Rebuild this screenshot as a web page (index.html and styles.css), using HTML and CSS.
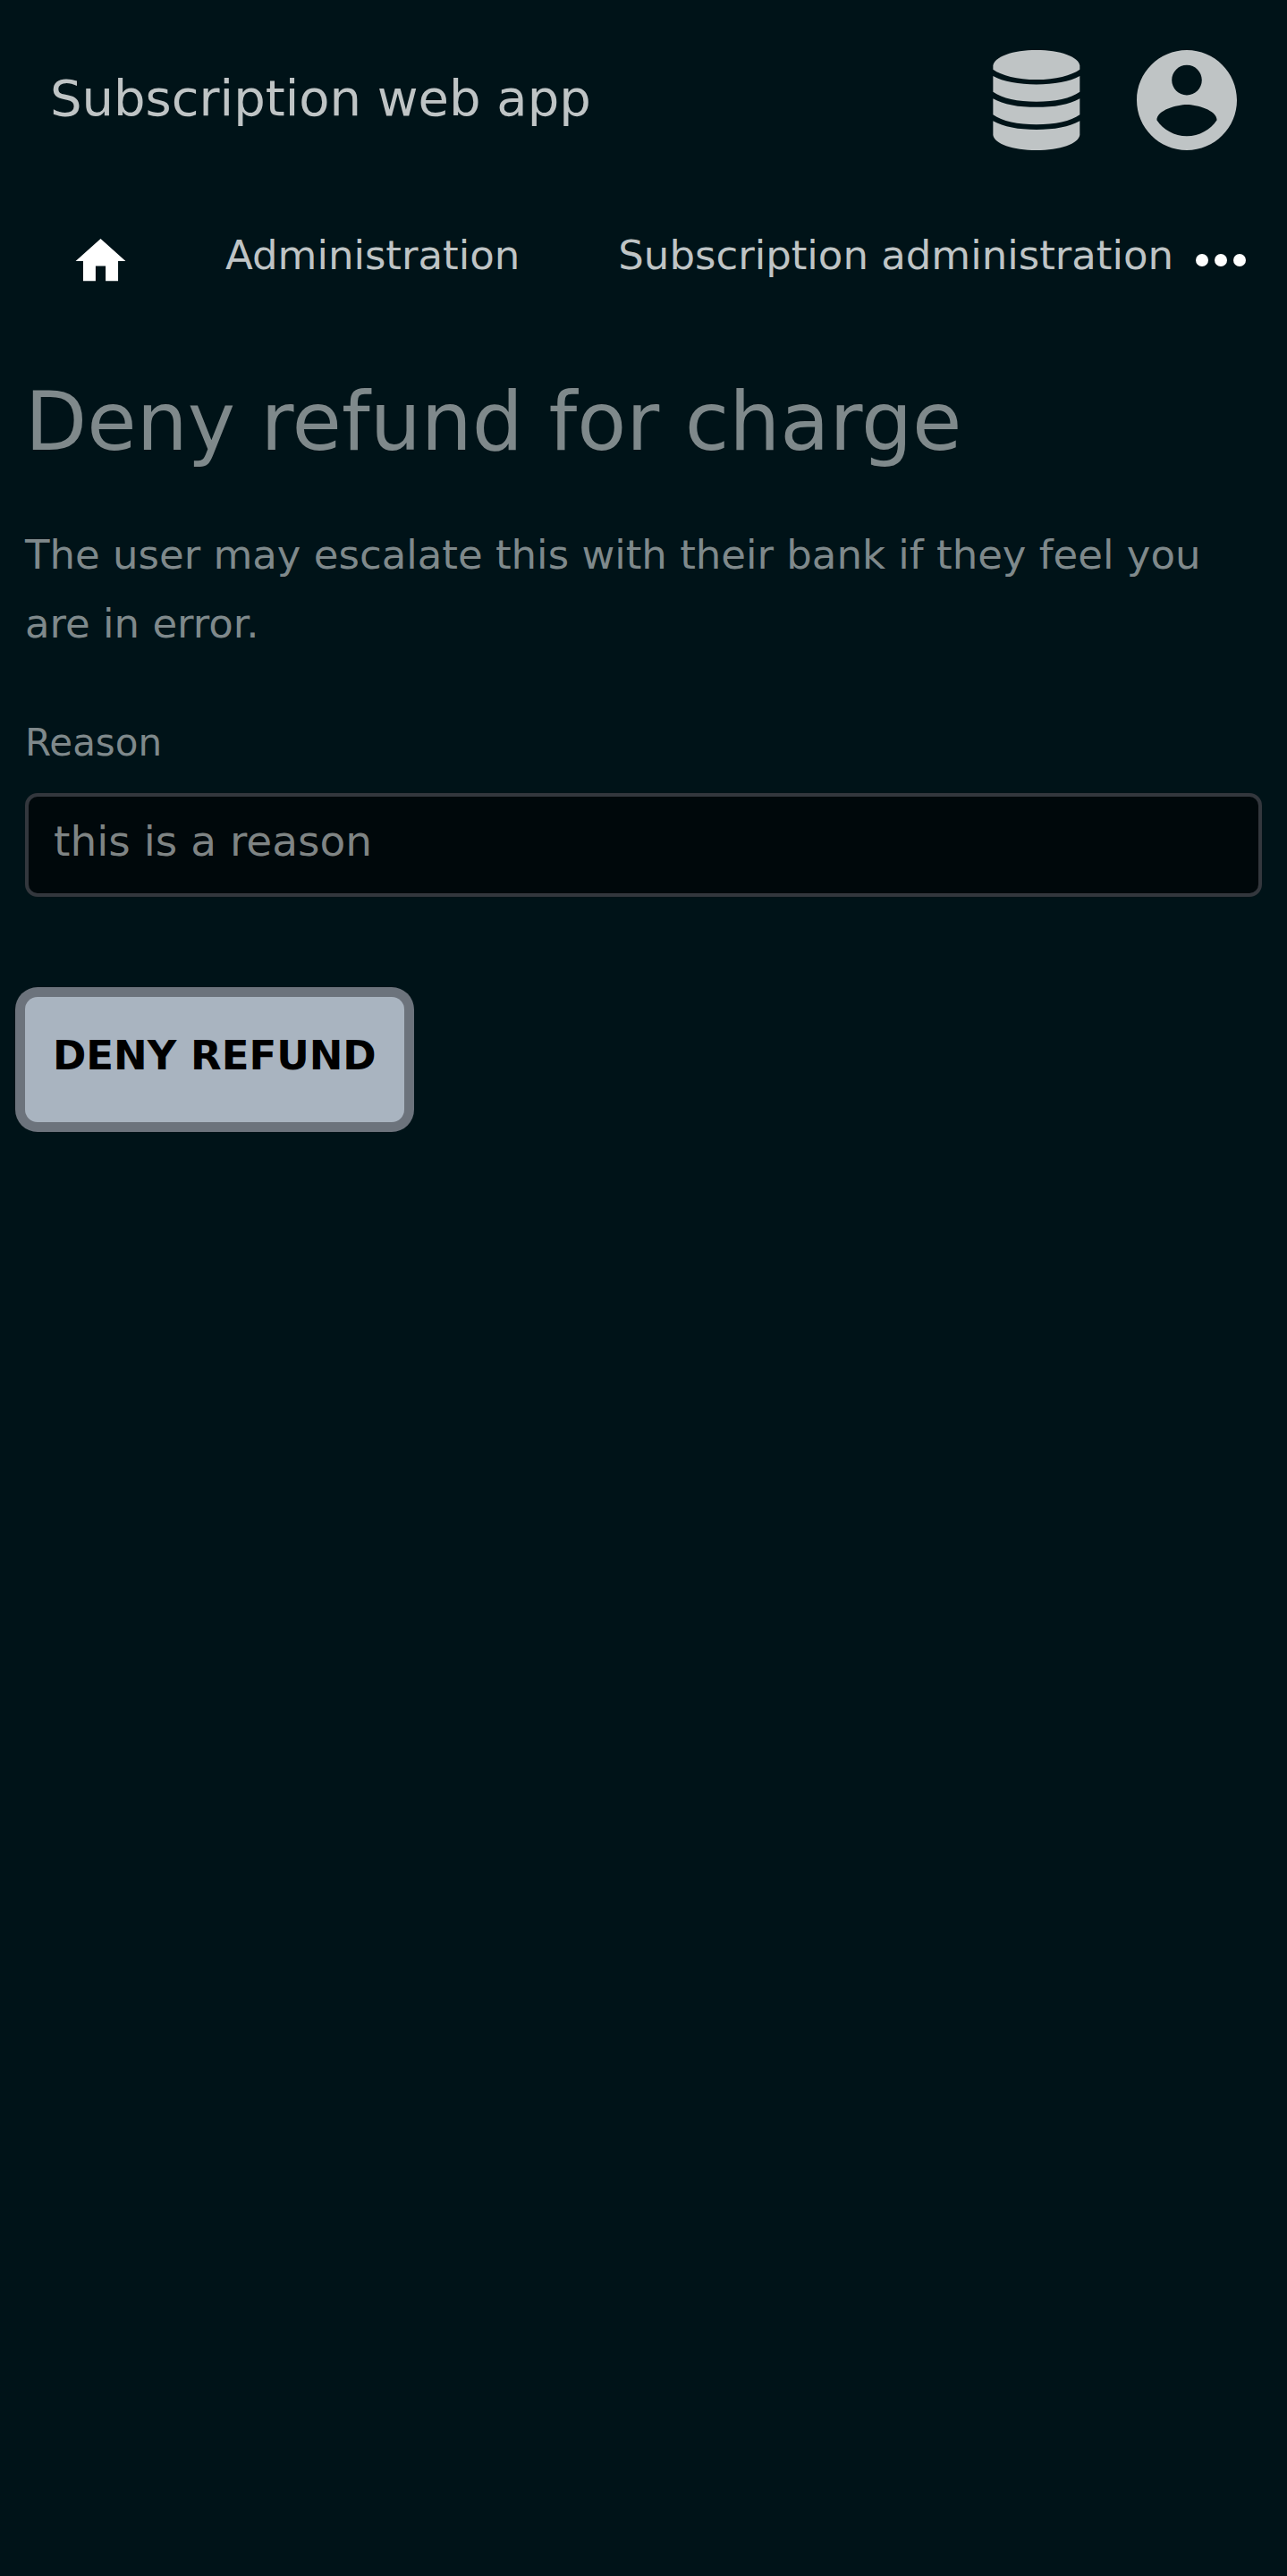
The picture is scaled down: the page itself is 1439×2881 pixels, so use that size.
FILE: index.html
```html
<!DOCTYPE html>
<html lang="en">
<head>
<meta charset="utf-8">
<meta name="viewport" content="width=device-width, initial-scale=1">
<title>Deny refund for charge</title>
<link rel="stylesheet" href="styles.css">
</head>
<body>
<header class="header">
  <a class="brand" href="#">Subscription web app</a>
  <div class="menus">
    <button class="icon-button" type="button" aria-label="Administrator menu">
      <svg class="icon-large" viewBox="-22 0 335 335" aria-hidden="true">
        <path d="M0 52C4 22 66 0 145 0s141 22 145 52v13C262 85 209 99 145 99S28 85 0 65z"/>
        <path d="M0 87c34 19 86 28 145 28s111-9 145-28v53c-30 22-83 33-145 33S30 162 0 140z"/>
        <path d="M0 162c34 20 86 29 145 29s111-9 145-29v54c-30 22-83 33-145 33S30 238 0 216z"/>
        <path d="M0 237c34 20 86 29 145 29s111-9 145-29v47c-4 29-66 51-145 51S4 313 0 284z"/>
      </svg>
    </button>
    <button class="icon-button" type="button" aria-label="Account menu">
      <svg class="icon-large" viewBox="2 2 20 20" aria-hidden="true">
        <path d="M12 2C6.48 2 2 6.48 2 12s4.480 10 10 10 10-4.480 10-10S17.520 2 12 2zm0 3c1.660 0 3 1.340 3 3s-1.340 3-3 3-3-1.340-3-3 1.340-3 3-3zm0 14.200c-2.500 0-4.710-1.280-6-3.220.03-1.990 4-3.080 6-3.080 1.990 0 5.970 1.090 6 3.080-1.290 1.940-3.500 3.220-6 3.220z"/>
      </svg>
    </button>
  </div>
</header>
<nav class="nav" aria-label="Main">
  <a class="home" href="#" aria-label="Home">
    <svg class="icon-home" viewBox="0 0 24 24" aria-hidden="true"><path d="M10 20v-6h4v6h5v-8h3L12 3 2 12h3v8z"/></svg>
  </a>
  <a class="nav-link" href="#">Administration</a>
  <a class="nav-link" href="#">Subscription administration</a>
  <button class="more" type="button" aria-label="More">
    <svg class="icon-more" viewBox="0 0 56 68" aria-hidden="true"><circle cx="7" cy="33" r="7"/><circle cx="28" cy="33" r="7"/><circle cx="49" cy="33" r="7"/></svg>
  </button>
</nav>
<main class="main">
  <h1 class="title">Deny refund for charge</h1>
  <p class="note">The user may escalate this with their bank if they feel you are in error.</p>
  <form class="form">
    <label class="label" for="reason">Reason</label>
    <input class="field" id="reason" name="reason" type="text" value="this is a reason">
    <button class="submit" type="submit">DENY REFUND</button>
  </form>
</main>
</body>
</html>
```
FILE: styles.css
```css
*, *::before, *::after {
  box-sizing: border-box;
}

body {
  margin: 0;
  background: #001318;
  color: #7f898b;
  font-family: "DejaVu Sans", sans-serif;
  font-size: 45px;
  line-height: 77px;
}

button {
  border: 0;
  padding: 0;
  background: none;
  color: inherit;
  font: inherit;
}

svg {
  display: block;
  fill: currentColor;
}

.header {
  display: flex;
  align-items: flex-start;
  justify-content: space-between;
  padding: 56px 56px 55px;
  color: #bfc4c5;
}

.brand {
  color: inherit;
  font-size: 56px;
  line-height: 108px;
  text-decoration: none;
}

.menus {
  display: flex;
  gap: 56px;
}

.icon-large {
  width: 112px;
  height: 112px;
}

.nav {
  display: flex;
  align-items: flex-start;
  padding: 24px 46px 24px 28px;
}

.home {
  display: flex;
  justify-content: center;
  width: 168px;
  padding-top: 11px;
  color: #fff;
}

.icon-home {
  width: 67px;
  height: 68px;
}

.nav-link {
  margin-left: 56px;
  color: #bfc4c5;
  text-decoration: none;
  white-space: nowrap;
}

.nav-link + .nav-link {
  margin-left: 110px;
}

.more {
  margin-left: auto;
  padding-top: 11px;
  color: #fff;
}

.icon-more {
  width: 56px;
  height: 68px;
}

.main {
  padding: 68px 28px;
}

.title {
  margin: 0 0 56px;
  font-size: 90px;
  font-weight: 400;
  line-height: 108px;
}

.note {
  margin: 0 0 56px;
}

.form {
  display: flex;
  flex-direction: column;
  align-items: flex-start;
}

.label {
  margin-bottom: 18px;
  font-size: 42px;
}

.field {
  width: 100%;
  height: 116px;
  margin: 0 0 112px;
  padding: 0 28px 10px;
  border: 4px solid #33373d;
  border-radius: 14px;
  background: #00080b;
  color: #7f8484;
  font: inherit;
  font-size: 47px;
}

.submit {
  height: 140px;
  padding: 0 31px 10px;
  border-radius: 14px;
  background: #a9b4c0;
  box-shadow: 0 0 0 11px #6c737c;
  color: #000;
  font-weight: 700;
}
```
